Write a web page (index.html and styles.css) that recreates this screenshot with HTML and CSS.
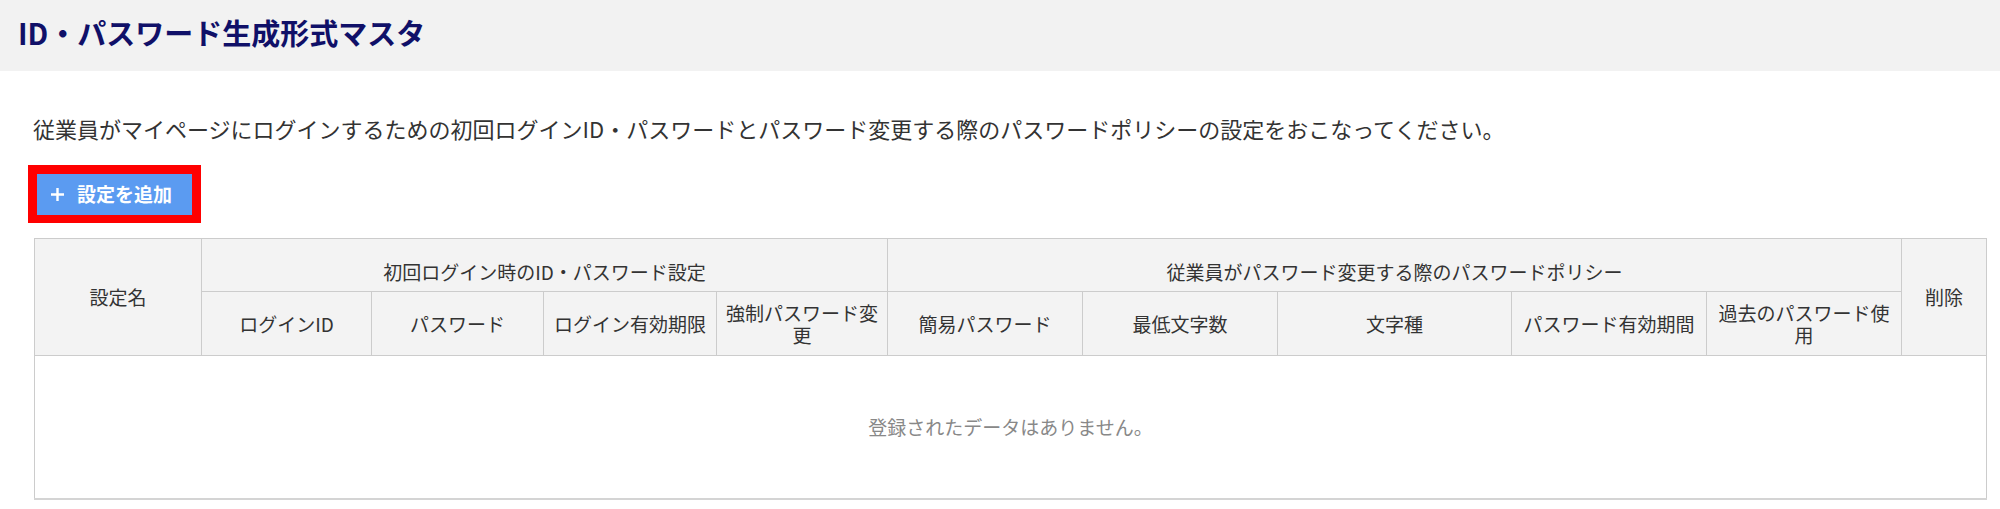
FILE: index.html
```html
<!DOCTYPE html>
<html lang="ja">
<head>
<meta charset="utf-8">
<title>ID・パスワード生成形式マスタ</title>
<link rel="stylesheet" href="styles.css">
</head>
<body>
<header class="page-header">
  <h1 class="page-title">ID・パスワード生成形式マスタ</h1>
</header>
<main class="content">
  <p class="description">従業員がマイページにログインするための初回ログインID・パスワードとパスワード変更する際のパスワードポリシーの設定をおこなってください。</p>
  <div class="highlight">
    <button class="add-button" type="button">
      <svg class="plus" width="15" height="15" viewBox="0 0 15 15"><path d="M7.5 1v13M1 7.5h13" stroke="#fff" stroke-width="2.4" fill="none"/></svg>
      <span>設定を追加</span>
    </button>
  </div>
  <table class="master-table">
    <colgroup>
      <col class="c-name"><col class="c-a"><col class="c-b"><col class="c-c"><col class="c-d">
      <col class="c-e"><col class="c-f"><col class="c-g"><col class="c-h"><col class="c-i"><col class="c-del">
    </colgroup>
    <thead>
      <tr class="row-group">
        <th rowspan="2">設定名</th>
        <th colspan="4" class="group">初回ログイン時のID・パスワード設定</th>
        <th colspan="5" class="group">従業員がパスワード変更する際のパスワードポリシー</th>
        <th rowspan="2">削除</th>
      </tr>
      <tr class="row-sub">
        <th>ログインID</th>
        <th>パスワード</th>
        <th>ログイン有効期限</th>
        <th>強制パスワード変更</th>
        <th>簡易パスワード</th>
        <th>最低文字数</th>
        <th>文字種</th>
        <th>パスワード有効期間</th>
        <th>過去のパスワード使用</th>
      </tr>
    </thead>
    <tbody>
      <tr>
        <td colspan="11" class="empty">登録されたデータはありません。</td>
      </tr>
    </tbody>
  </table>
</main>
</body>
</html>
```
FILE: styles.css
```css
html, body {
  margin: 0;
  padding: 0;
  background: #ffffff;
}
body {
  font-family: "Noto Sans CJK JP", "Noto Sans", sans-serif;
  color: #333333;
}
.page-header {
  height: 71px;
  background: #f2f2f2;
  display: flex;
  align-items: center;
  padding-left: 18px;
  box-sizing: border-box;
}
.page-title {
  margin: 0;
  font-size: 29px;
  line-height: 1;
  font-weight: 700;
  color: #101068;
  padding-bottom: 6px;
}
.content {
  padding: 0 14px 0 33px;
}
.description {
  margin: 41px 0 0;
  font-size: 22px;
  line-height: 32px;
  color: #333333;
}
.highlight {
  display: inline-flex;
  margin: 21px 0 0 -5px;
  border: 9px solid #ff0000;
  border-bottom-width: 8px;
}
.add-button {
  display: flex;
  align-items: center;
  gap: 12px;
  width: 155px;
  height: 41px;
  padding: 0 0 0 13px;
  border: none;
  background: #5b9bf1;
  color: #ffffff;
  font-family: inherit;
  font-size: 19px;
  font-weight: 700;
  line-height: 1;
  box-sizing: border-box;
}
.add-button span {
  padding-bottom: 2px;
}
.master-table {
  display: table;
  margin: 15px 0 0 1px;
  width: 1952px;
  table-layout: fixed;
  border-collapse: collapse;
  font-size: 19px;
}
.c-name { width: 167px; }
.c-a { width: 170px; }
.c-b { width: 172px; }
.c-c { width: 173px; }
.c-d { width: 171px; }
.c-e { width: 195px; }
.c-f { width: 195px; }
.c-g { width: 234px; }
.c-h { width: 195px; }
.c-i { width: 195px; }
.c-del { width: 85px; }
.master-table th {
  background: #f3f3f3;
  border: 1px solid #cccccc;
  font-weight: 400;
  color: #333333;
  line-height: 22px;
  padding: 0 8px;
  text-align: center;
  vertical-align: middle;
}
.row-group th {
  height: 53px;
  box-sizing: border-box;
}
.row-group th.group {
  padding-top: 14px;
}
.row-sub th {
  height: 64px;
  box-sizing: border-box;
}
.master-table td.empty {
  height: 140px;
  border: 1px solid #cccccc;
  border-bottom: 2px solid #d4d4d4;
  text-align: center;
  vertical-align: middle;
  color: #888888;
  font-size: 19px;
  line-height: 22px;
}
```
